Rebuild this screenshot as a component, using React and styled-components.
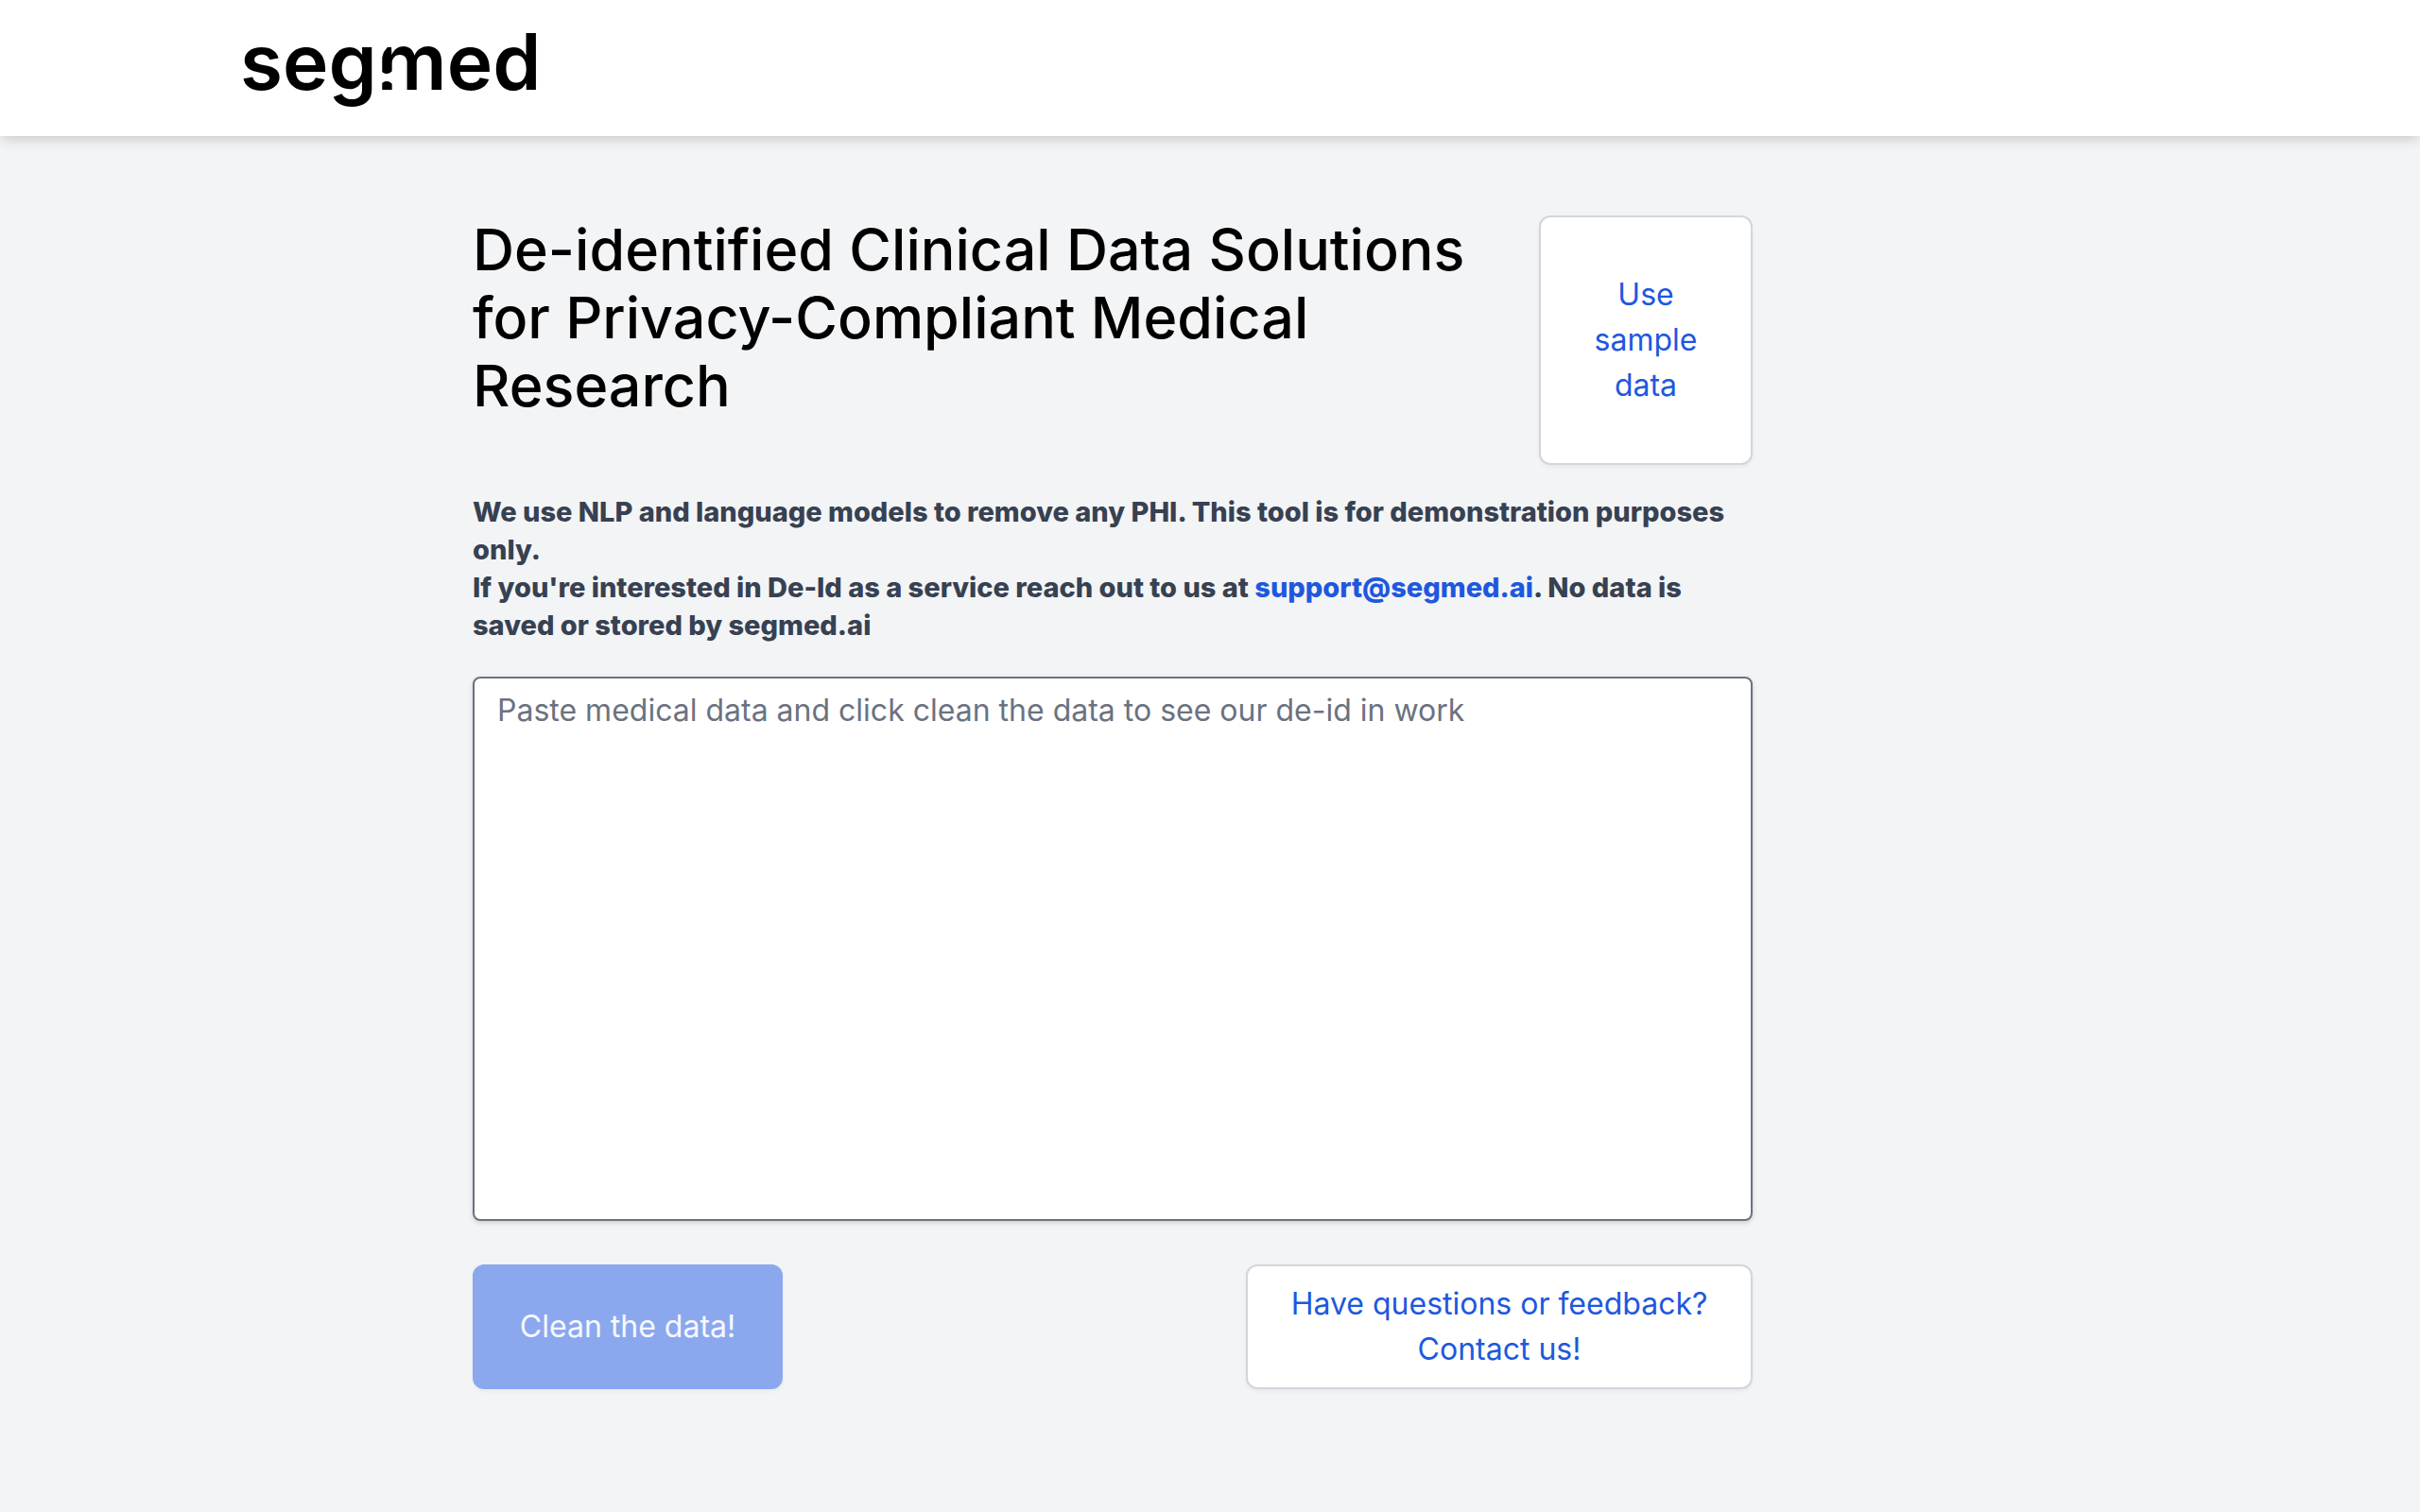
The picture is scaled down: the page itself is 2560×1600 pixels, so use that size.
import { useState } from 'react';
import styled, { createGlobalStyle } from 'styled-components';

const GlobalStyle = createGlobalStyle`
    *, *::before, *::after {
        box-sizing: border-box;
    }

    body {
        margin: 0;
        background-color: #f3f4f6;
        color: #000;
        font-family: Inter, sans-serif;
        font-size: 32px;
        line-height: 48px;
    }
`;

const Header = styled.header`
    background-color: white;
    box-shadow: 0 8px 12px -2px rgba(0, 0, 0, 0.1), 0 4px 8px -2px rgba(0, 0, 0, 0.06);
`;

const Container = styled.div`
    max-width: 2048px;
    margin: 0 auto;
`;

const HomeLink = styled.a`
    display: inline-flex;
    align-items: center;
    height: 144px;
    vertical-align: top;
`;

const LogoText = styled.text`
    font-family: Inter, sans-serif;
    font-size: 82px;
    font-weight: 600;
`;

const Main = styled.main`
    max-width: 1598px;
    padding: 84px 0 96px 244px;
`;

const Intro = styled.div`
    display: flex;
    justify-content: space-between;
    gap: 64px;
`;

const Title = styled.h1`
    flex: 1;
    margin: 0;
    padding-bottom: 48px;
    font-size: 61px;
    font-weight: 500;
    line-height: 72px;
`;

const Description = styled.p`
    margin: 30px 0 34px;
    color: #374151;
    font-size: 29px;
    font-weight: 800;
    line-height: 40px;
`;

const Link = styled.a`
    color: #1e58de;
    text-decoration: none;
`;

const TextArea = styled.textarea`
    display: block;
    width: 100%;
    height: 576px;
    padding: 10px 24px;
    border: 2px solid #6b7280;
    border-radius: 8px;
    background-color: white;
    box-shadow: 0 2px 6px rgba(0, 0, 0, 0.1), 0 2px 4px rgba(0, 0, 0, 0.06);
    color: #111827;
    font: inherit;
    resize: none;

    &::placeholder {
        color: #6b7280;
        opacity: 1;
    }
`;

const Actions = styled.div`
    display: flex;
    justify-content: space-between;
    margin-top: 46px;
`;

const Button = styled.button`
    width: ${(props) => props.$width};
    padding: 16px 40px;
    border: 2px solid ${(props) => (props.$primary ? '#1e58de' : '#d2d6dc')};
    border-radius: 12px;
    background-color: ${(props) => (props.$primary ? '#1e58de' : 'white')};
    box-shadow: 0 2px 4px rgba(0, 0, 0, 0.05);
    color: ${(props) => (props.$primary ? 'white' : '#1e58de')};
    font: inherit;
    cursor: pointer;

    &:disabled {
        border-color: #8ba8ef;
        background-color: #8ba8ef;
        color: #f6f8fc;
        cursor: default;
    }
`;

const SAMPLE = 'Patient John Smith was seen on 01/12/2020 for a chest radiograph.';

// The wordmark's "m" has a rounded shoulder and a break in its first stem
const Logo = () => (
    <svg width="340" height="120" viewBox="0 0 340 120" role="img" aria-label="segmed">
        <LogoText x="-2" y="83">segmed</LogoText>
        <path d="M146 35H158Q148 40 147 56H146Z" fill="white" />
        <path d="M145 61Q153 71 161 61V79Q153 69 145 79Z" fill="white" />
    </svg>
);

const App = () => {
    const [text, setText] = useState('');

    return (
        <>
            <GlobalStyle />
            <Header>
                <Container>
                    <HomeLink href="/">
                        <Logo />
                    </HomeLink>
                </Container>
            </Header>
            <Container>
                <Main>
                    <Intro>
                        <Title>De-identified Clinical Data Solutions for Privacy-Compliant Medical Research</Title>
                        <Button type="button" $width="226px" onClick={() => setText(SAMPLE)}>
                            Use sample data
                        </Button>
                    </Intro>
                    <Description>
                        We use NLP and language models to remove any PHI. This tool is for demonstration purposes only.
                        <br />
                        If you're interested in De-Id as a service reach out to us at{' '}
                        <Link href="mailto:support@segmed.ai">support@segmed.ai</Link>. No data is saved or stored by
                        segmed.ai
                    </Description>
                    <TextArea
                        aria-label="Medical data"
                        placeholder="Paste medical data and click clean the data to see our de-id in work"
                        value={text}
                        onChange={(e) => setText(e.target.value)}
                    />
                    <Actions>
                        <Button type="button" $primary $width="328px" disabled={!text}>
                            Clean the data!
                        </Button>
                        <Button type="button" $width="536px">
                            Have questions or feedback? Contact us!
                        </Button>
                    </Actions>
                </Main>
            </Container>
        </>
    );
};

export default App;
